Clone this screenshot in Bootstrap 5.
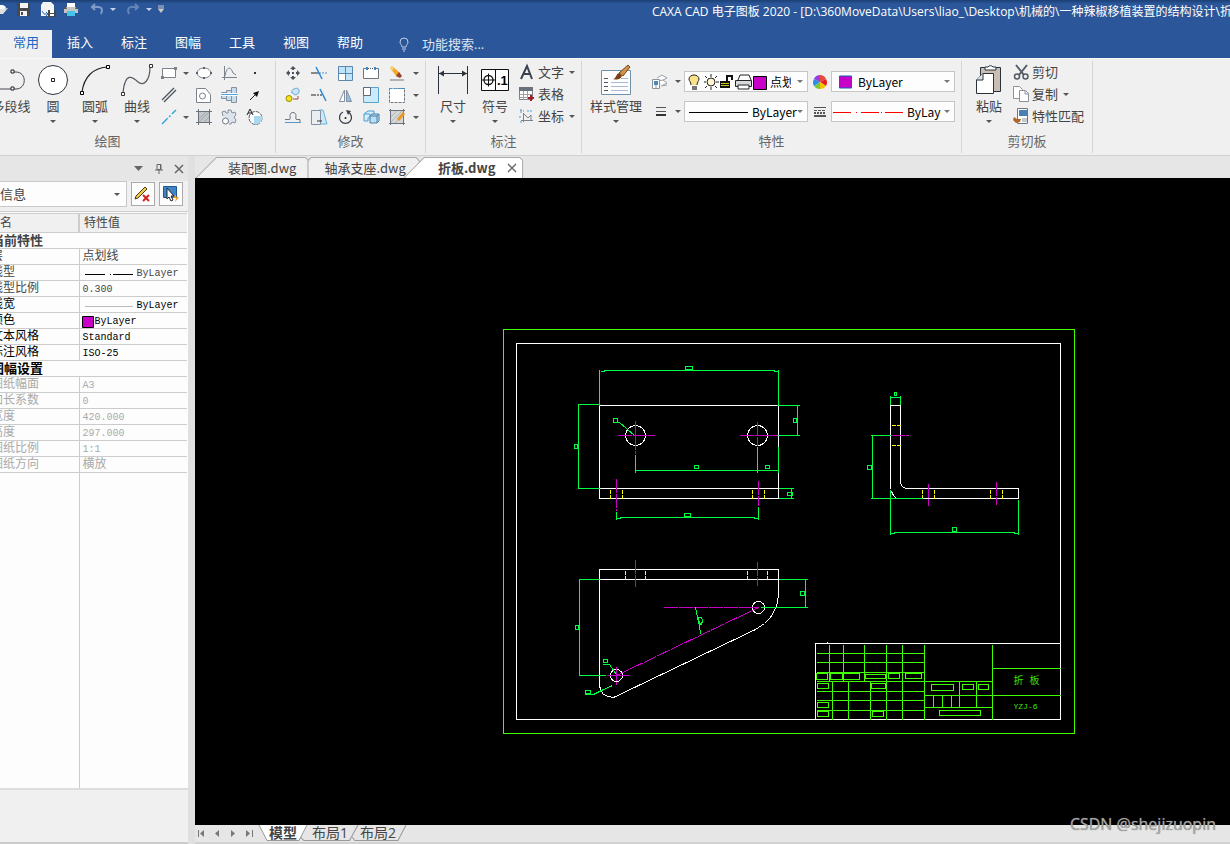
<!DOCTYPE html>
<html lang="zh-CN">
<head>
<meta charset="utf-8">
<meta name="viewport" content="width=device-width, initial-scale=1">
<title>CAXA CAD 电子图板 2020</title>
<link href="https://cdn.jsdelivr.net/npm/bootstrap@5.3.0/dist/css/bootstrap.min.css" rel="stylesheet">
<style>
body{font:13px/18px "Open Sans","Noto Sans CJK SC",sans-serif;color:#444;background:#e6e6e6;height:100vh;overflow:hidden}
button{background:none;border:0;padding:0;color:inherit}
svg{display:block;flex:none;overflow:visible}
.ui-cjk{font-family:"Noto Sans CJK SC",sans-serif}
/* title bar and menu */
.app-head{background:linear-gradient(#1d3f76,#2b579a 4px);color:#fff}
.title-row{height:30px}
.quick{height:18px;gap:6px}
.app-title{width:47%;font-size:12px;line-height:24px}
.menu-row{height:28px;gap:2px}
.menu-row .nav-link{width:52px;padding:0;line-height:24px;color:#fff;text-align:center;border-radius:0}
.menu-row .nav-link.active{background:#f0f0f0;color:#1a66c2}
.finder{background:none;border:0;color:#dce5f2;width:120px;padding:0;outline:0}
.finder::placeholder{color:#dce5f2;opacity:1}
/* ribbon */
.ribbon{height:98px;background:#f0f0f0;border-top:1px solid #f8f8f8;border-bottom:1px solid #d2d2d2}
.rgroup{border-right:1px solid #d5d5d5;margin:2px 0;padding-top:1px;display:flex;flex-direction:column}
.rgroup-name{color:#666;text-align:center;line-height:18px;margin-top:4px}
.bigbtn{width:42px;height:66px;display:flex;flex-direction:column;align-items:center;white-space:nowrap}
.bigbtn .pic{height:35px;display:flex;align-items:center}
.bigbtn.wide{width:60px}
.bigbtn.first-cut{margin-left:-10px}
.group-pad{padding-left:6px}
.caret{width:0;height:0;border:3px solid transparent;border-top-color:#555;border-bottom:0;flex:none}
.bigbtn .caret{margin-top:5px}
.tools{display:grid;grid-auto-rows:22px;grid-auto-columns:26px;grid-auto-flow:column;grid-template-rows:repeat(3,22px)}
.tools>*{display:flex;align-items:center;justify-content:center}
.tools .slim{width:12px}
.tool-line{height:22px;display:flex;align-items:center;gap:2px;line-height:16px;padding-bottom:2px}
.tool-line svg{width:18px}
.tool-line .caret{margin-left:3px}
.combo-rows{display:flex;flex-direction:column;gap:9px;padding-top:9px}
.combo{height:21px;width:124px;border:1px solid #c6c6c6;background:#fdfdfd;display:flex;align-items:center;color:#000}
.combo select{appearance:none;border:0;background:none;padding:0;outline:0;color:inherit;font:12px/16px "Noto Sans CJK SC",sans-serif;min-width:0}
.combo .caret{border-top-color:#777;margin:0 4px 0 auto}
.linework{shape-rendering:crispEdges}
/* properties panel */
.side{width:195px;border-right:7px solid #e0e0e0;background:#f0f0f0;flex:none}
.side-head{height:25px;background:#e6e6e6;gap:12px;padding-right:5px}
.side-filter{gap:4px;padding-bottom:4px}
.side-combo{width:127px;height:26px;border:1px solid #c8c8c8;border-left:0;background:#fdfdfd}
.side-combo select{appearance:none;border:0;background:none;padding:0;outline:0;flex:1;color:#444}
.side-btn{width:24px;height:24px;border:1px solid #aaa;background:#fdfdfd;display:flex;align-items:center;justify-content:center}
.prop-box{border-top:1px solid #ccc;padding-top:1px;background:#fdfdfd}
.props{font:12px/15px "Liberation Mono","Noto Sans CJK SC",monospace;width:187px;table-layout:fixed;border-collapse:collapse}
.props col.names{width:79px}
.props tr{height:16px}
.props td,.props th{padding:2px 0 0;border-bottom:1px solid #ccc;white-space:nowrap;overflow:hidden;height:16px;line-height:13px}
.props thead th{height:19px;line-height:16px;background:#f0f0f0;font-weight:400;border-top:1px solid #ccc}
.props tbody th{font-weight:400}
.props tbody th:first-child:not([colspan]){border-right:1px solid #ccc}
.props span.cut{display:block;margin-left:-9px}
.props td{padding-left:3px}
.props td .latin{font-size:10px}
.props .sect .cut{font-weight:700;font-size:13px}
.props .off{color:#aaa}
.props .on{color:#000}
.col-rest{width:80px;border-right:1px solid #ccc}
.side-foot{height:56px;border-top:2px solid #ddd;background:#f0f0f0;border-bottom:2px solid #ccc}
/* document area */
.doc-tabs{height:22px;padding-left:1px;background:#e6e6e6;line-height:16px}
.doc-tab,.sheet-tab{position:relative;display:flex;align-items:center;white-space:nowrap}
.doc-tab>svg.edge,.sheet-tab>svg.edge{position:absolute;inset:0;width:100%;height:100%;z-index:0}
.doc-tab>span,.sheet-tab>span{position:relative}
.doc-tab{height:21px;margin-top:1px}
.paper{background:#000;min-height:0}
.paper svg{width:100%;height:100%}
.sheets{height:19px;background:#e6e6e6;border-bottom:2px solid #d2d2d2;font-size:14px;line-height:16px}
.sheet-tab{height:16px}
.sheets .nav-mark{width:16px;padding-right:4px;display:flex;justify-content:center}
.stamp{position:absolute;right:14px;bottom:10px;font:16px/20px "Open Sans",sans-serif;color:#a6a6a6;text-shadow:0 0 1px #777}
</style>
</head>
<body class="d-flex flex-column">
<header class="app-head">
  <div class="title-row d-flex align-items-start">
    <div class="quick d-flex align-items-center">
      <button aria-label="打开"><svg width="10" height="16" viewBox="0 0 10 16"><path d="M0 4h3l3 2-1 2H0z" fill="#fff"/><path d="M0 8l8-1-5 6H0z" fill="#e0e0e0"/></svg></button>
      <button aria-label="保存"><svg width="15" height="16" viewBox="0 0 15 16"><path d="M1 2h13v13H1z" fill="#47484a"/><path d="M4 2h8v5H4zM4 10h7v5H4z" fill="#f3f3f3"/><path d="M5 11h2v3H5z" fill="#47484a"/></svg></button>
      <button class="ms-1" aria-label="另存为"><svg width="15" height="17" viewBox="0 0 15 17"><path d="M2 1h8l3 3v11H0V4z" fill="#f4f4f4"/><path d="M1 10l2 3h4M5 11l2 2-2 2" stroke="#2b6cb8" fill="none"/><path d="M7 9h8v7H7z" fill="#47484a"/><path d="M9 9h4v3H9zM9 13h4v2H9z" fill="#fff"/></svg></button>
      <button aria-label="打印"><svg width="18" height="16" viewBox="-1 0 18 16"><path d="M4 2h8v5H4z" fill="#fff"/><path d="M1 6h14v6H1z" fill="#c5c5c5"/><path d="M1 6h2l1 2h8l1-2h2v2H1z" fill="#555"/><path d="M4 10h8v5H4z" fill="#46c3e8"/></svg></button>
      <button class="ms-1" aria-label="撤销"><svg width="14" height="12" viewBox="0 0 14 12"><path d="M5 1L2 4l3 3M2 4h6c4 0 5 3 3 7" stroke="#7f9cc9" stroke-width="2" fill="none"/></svg></button>
      <span class="caret" style="border-top-color:#c7d3e6"></span>
      <button class="ms-1" aria-label="重做"><svg width="14" height="12" viewBox="0 0 14 12"><path d="M9 1l3 3-3 3M12 4H6C2 4 1 7 3 11" stroke="#6485b8" stroke-width="2" fill="none"/></svg></button>
      <span class="caret" style="border-top-color:#c7d3e6"></span>
      <button aria-label="自定义"><svg width="6" height="8" viewBox="0 0 6 8"><path d="M0 1h6M0 3h6" stroke="#c9c9c9"/><path d="M0 4h6L3 8z" fill="#c9c9c9"/></svg></button>
    </div>
    <div class="app-title ms-auto text-nowrap overflow-hidden">CAXA CAD 电子图板 2020 - [D:\360MoveData\Users\liao_\Desktop\机械的\一种辣椒移植装置的结构设计\折</div>
  </div>
  <nav class="menu-row nav flex-nowrap align-items-stretch">
    <a class="nav-link active" href="#">常用</a><a class="nav-link" href="#">插入</a><a class="nav-link" href="#">标注</a><a class="nav-link" href="#">图幅</a><a class="nav-link" href="#">工具</a><a class="nav-link" href="#">视图</a><a class="nav-link" href="#">帮助</a>
    <label class="d-flex align-items-center ms-3 ps-1" style="gap:12px">
      <svg width="12" height="14" viewBox="0 0 12 14"><path d="M4 10C4 8 2 7 2 5a4 4 0 0 1 8 0c0 2-2 3-2 5zM4 12h4M5 14h2" stroke="#c3cfe2" fill="none"/></svg>
      <input class="finder" type="text" placeholder="功能搜索..." aria-label="功能搜索">
    </label>
  </nav>
</header>

<div class="ribbon d-flex ui-cjk flex-nowrap">
  <section class="rgroup" style="width:276px">
    <div class="d-flex">
      <button class="bigbtn first-cut"><span class="pic"><svg width="30" height="32" viewBox="0 0 30 32"><path d="M17 8h3c11 0 11 17 0 17H0" fill="none" stroke="#444a55"/><path d="M15 6h3v3h-3zM15 23h3v3h-3z" fill="#fff" stroke="#222"/></svg></span>多段线</button>
      <button class="bigbtn"><span class="pic"><svg width="32" height="32" viewBox="0 0 32 32"><circle cx="16" cy="16" r="14.500" fill="#fff" stroke="#2d3440"/><path d="M14.500 14.500h3v3h-3z" fill="none" stroke="#222"/></svg></span>圆<i class="caret"></i></button>
      <button class="bigbtn"><span class="pic"><svg width="32" height="32" viewBox="0 0 32 32"><path d="M3 28C5 13 14 4 28 3" fill="none" stroke="#222" stroke-width="1.200"/><path d="M1.500 27.500h3v3h-3zM27.500 1.500h3v3h-3z" fill="#fff" stroke="#000"/></svg></span>圆弧<i class="caret"></i></button>
      <button class="bigbtn"><span class="pic"><svg width="32" height="32" viewBox="0 0 32 32"><path d="M2 29c2-22 10-16 15-11 6 5 12-2 12-15" fill="none" stroke="#555b64" stroke-width="1.200"/><path d="M.500 28.500h3v3h-3zM28.500.500h3v3h-3z" fill="#fff" stroke="#333"/></svg></span>曲线<i class="caret"></i></button>
      <div class="tools" style="grid-template-columns:22px 12px 24px">
        <button aria-label="矩形"><svg width="16" height="12" viewBox="0 0 16 12"><path d="M1.500 1.500h13v9h-13z" fill="#fff" stroke="#7a828c"/><path d="M0 9h3v3H0zM13 0h3v3h-3z" fill="#7a828c"/></svg></button>
        <button aria-label="平行线"><svg width="16" height="16" viewBox="0 0 16 16"><path d="M1 13L13 1M3 15L15 3" stroke="#4a515c" stroke-width="1.300"/></svg></button>
        <button aria-label="中心线"><svg width="16" height="16" viewBox="0 0 16 16"><path d="M1 15L15 1" stroke="#31a3dc" stroke-width="1.400" stroke-dasharray="8 2 2 2"/></svg></button>
        <span class="slim"><i class="caret"></i></span><span></span><span class="slim"><i class="caret"></i></span>
        <button aria-label="椭圆"><svg width="16" height="12" viewBox="0 0 16 12"><ellipse cx="8" cy="6" rx="7" ry="5" fill="#fff" stroke="#7a828c"/><path d="M0 5h2v2H0zM14 5h2v2h-2zM7 0h2v2H7zM7 10h2v2H7z" fill="#59616c"/></svg></button>
        <button aria-label="局部放大"><svg width="16" height="15" viewBox="0 0 16 15"><path d="M.500.500h9l5 6v8H.500z" fill="#fff" stroke="#7a828c"/><circle cx="6.500" cy="8" r="3" fill="none" stroke="#7a828c"/></svg></button>
        <button aria-label="填充"><svg width="16" height="16" viewBox="0 0 16 16"><path d="M3 3h10v10H3z" fill="#c4c7ca"/><path d="M3 10l7-7M3 13L13 3M8 13l5-5" stroke="#a4a9ae"/><path d="M2.500 0v16M13.500 0v16M0 2.500h16M0 13.500h16" stroke="#6b727c"/></svg></button>
        <button aria-label="公式曲线"><svg width="15" height="14" viewBox="0 0 15 14"><path d="M2.500 0v14M0 11.500h15" stroke="#7a828c"/><path d="M3 10C5-1 9 1 11 7l3 2" fill="none" stroke="#7a828c"/></svg></button>
        <button aria-label="轴"><svg width="17" height="16" viewBox="0 0 17 16"><path d="M.500 5.500h5v6h-5zM5.500 3.500h5v10h-5zM10.500.500h5v15h-5z" fill="#c9dcec" stroke="#8590a0"/><path d="M0 7.500h17" stroke="#fff" stroke-width="3"/><path d="M0 7.500h17" stroke="#4fa5e2"/></svg></button>
        <button aria-label="齿轮"><svg width="16" height="16" viewBox="0 0 16 16"><path d="M2 7L1 3l3-1 1 2h2V1h3l1 3 3-1 1 3-2 2 2 3-1 3-3-1-1 2H8" fill="#dde3e9" stroke="#8590a0"/><circle cx="4.500" cy="12" r="3" fill="#fff" stroke="#6c7683"/></svg></button>
        <button aria-label="点"><svg width="4" height="4"><path d="M1 1h2v2H1z" fill="#333"/></svg></button>
        <button aria-label="箭头"><svg width="12" height="12" viewBox="0 0 12 12"><path d="M1 11l5-5" stroke="#222"/><path d="M10 2L8 8 4 4z" fill="#111"/></svg></button>
        <button aria-label="块"><svg width="16" height="16" viewBox="0 0 16 16"><circle cx="8.500" cy="9" r="6.500" fill="#fff" stroke="#59616c" stroke-dasharray="4 1"/><path d="M7 7h8a6.500 6.500 0 0 1-8 8z" fill="#a9d8f2"/><path d="M0 6l3-6 3 6M1 4h4" stroke="#222" fill="none"/></svg></button>
      </div>
    </div>
    <div class="rgroup-name" style="padding-right:60px">绘图</div>
  </section>

  <section class="rgroup" style="width:150px">
    <div class="tools ms-1">
      <button aria-label="平移"><svg width="14" height="14" viewBox="0 0 14 14"><path d="M6 6h2v2H6zM6 2h2v2H6zM6 10h2v2H6zM2 6h2v2H2zM10 6h2v2h-2z" fill="#4c535d"/><path d="M7 0l3 3H4zM7 14l3-3H4zM0 7l3-3v6zM14 7l-3-3v6z" fill="#4c535d"/></svg></button>
      <button aria-label="平移复制"><svg width="16" height="16" viewBox="0 0 16 16"><circle cx="4" cy="11.500" r="3" fill="#f7e31c" stroke="#9b8b00"/><path d="M7 6a3 3 0 0 1 2-4c3-2 6 0 5 3s-5 4-6 1z" fill="#cbe5f7" stroke="#67a7d5"/><path d="M8 12h5v-3" stroke="#a44" fill="none"/></svg></button>
      <button aria-label="等距线"><svg width="16" height="14" viewBox="0 0 16 14"><path d="M0 9.500h4c2 0 1-2 1-4 0-4 6-4 6 0 0 2-1 4 1 4h3v3H0" fill="none" stroke="#6d7783"/><path d="M0 12.500h16" stroke="#5499cd"/></svg></button>
      <button aria-label="裁剪"><svg width="16" height="16" viewBox="0 0 16 16"><path d="M0 8h8" stroke="#222"/><path d="M8 8h8" stroke="#4b95d1" stroke-dasharray="2 1"/><path d="M5 2l6 12" stroke="#2e8ad8" stroke-width="1.500"/></svg></button>
      <button aria-label="延伸"><svg width="16" height="14" viewBox="0 0 16 14"><path d="M0 7h5" stroke="#222"/><path d="M6 7h5" stroke="#222" stroke-dasharray="2 1"/><path d="M9 1l6 12" stroke="#2e8ad8" stroke-width="1.500"/></svg></button>
      <button aria-label="拉伸"><svg width="16" height="16" viewBox="0 0 16 16"><path d="M8 1h4l4 14H8z" fill="#cce9fa" stroke="#6cb2dd"/><path d="M.500 1.500h9v14h-9z" fill="#e9eef2" stroke="#8590a0"/><path d="M6 12h5" stroke="#333"/></svg></button>
      <button aria-label="阵列"><svg width="15" height="15" viewBox="0 0 15 15"><path d="M.500 .500h14v14H.500z" fill="#bfe4fa" stroke="#5c87ac"/><path d="M1 8h6v6H1z" fill="#fff"/><path d="M.500 7.500h14M7.500.500v14" stroke="#5c87ac"/></svg></button>
      <button aria-label="镜像"><svg width="13" height="13" viewBox="0 0 13 13"><path d="M5.500 1v11.500h-5z" fill="#fff" stroke="#8590a0"/><path d="M7.500 1v11.500h5z" fill="#8cc2e8" stroke="#8590a0"/></svg></button>
      <button aria-label="旋转"><svg width="15" height="15" viewBox="0 0 15 15"><path d="M5 2a6 6 0 1 0 5 0" fill="none" stroke="#3a414c" stroke-width="1.300"/><path d="M8 0l5 1-3 4z" fill="#3a414c"/><circle cx="7.500" cy="8" r="1" fill="#222"/></svg></button>
      <button aria-label="打断"><svg width="16" height="14" viewBox="0 0 16 14"><path d="M4 2.500H.500v10h15v-10H12" fill="#fff" stroke="#6c7683"/><path d="M5 2.500h6" stroke="#555" stroke-dasharray="1 1"/><path d="M3 1h2v3H3zM11 1h2v3h-2z" fill="#2e8ad8"/></svg></button>
      <button aria-label="缩放"><svg width="16" height="16" viewBox="0 0 16 16"><path d="M.500.500h15v15H.500z" fill="#c9ebfb" stroke="#5ba3cf"/><path d="M.500.500h7v8h-7z" fill="#fff" stroke="#5c6b7a"/></svg></button>
      <button aria-label="分解"><svg width="17" height="14" viewBox="0 0 17 14"><path d="M1 4l4-3h6v7H5v3H1zM1 4h6v4" fill="#d6eefb" stroke="#4b9dd0"/><path d="M7 6l2-2h7v7l-2 2H7zM7 6h7v7M14 6l2-2" fill="#b8dff5" stroke="#4b7fa6"/></svg></button>
      <button aria-label="删除"><svg width="16" height="16" viewBox="0 0 16 16"><path d="M1 3l2-2 8 7-3 4z" fill="#f5a623"/><path d="M1 3l2-2 2 2-2 3z" fill="#f9cf7a"/><path d="M10 7l3 4-2 2-4-2z" fill="#96422f"/><path d="M1 15h14" stroke="#777"/></svg></button>
      <button aria-label="矩形选择"><svg width="16" height="15" viewBox="0 0 16 15"><path d="M.500 .500h15v14H.500z" fill="#fff" stroke="#6c7683" stroke-dasharray="3 1"/><path d="M0 .500h16" stroke="#3b9be0" stroke-dasharray="3 2"/></svg></button>
      <button aria-label="编辑填充"><svg width="16" height="16" viewBox="0 0 16 16"><path d="M2 2h12v12H2z" fill="#d4d6d8"/><path d="M2 8l6-6M2 13L13 2M6 14l8-8" stroke="#b4b7ba"/><path d="M1.500 0v16M14.500 0v16M0 1.500h16M0 14.500h16" stroke="#6b727c"/><path d="M9 11l6-7" stroke="#e79a22" stroke-width="3"/></svg></button>
      <span class="slim"><i class="caret"></i></span><span class="slim"><i class="caret"></i></span><span class="slim"><i class="caret"></i></span>
    </div>
    <div class="rgroup-name">修改</div>
  </section>

  <section class="rgroup" style="width:156px">
    <div class="d-flex group-pad">
      <button class="bigbtn"><span class="pic"><svg width="30" height="30" viewBox="0 0 30 30"><path d="M.500 1v28M29.500 1v28M1 8.500h28" stroke="#2b323d"/><path d="M1 8.500l5-3v6zM29 8.500l-5-3v6z" fill="#2b323d"/></svg></span>尺寸<i class="caret"></i></button>
      <button class="bigbtn"><span class="pic"><svg width="28" height="22" viewBox="0 0 28 22"><path d="M.500.500h27v21H.500zM14.500.500v21" fill="#fff" stroke="#111"/><circle cx="7.500" cy="11" r="4.500" fill="none" stroke="#111" stroke-width="1.300"/><path d="M1 11h13M7.500 4.500v13" stroke="#111"/><text x="16" y="16" font-size="13" font-weight="700" font-family="Liberation Sans">.1</text></svg></span>符号<i class="caret"></i></button>
      <div style="padding-left:2px">
        <button class="tool-line"><svg height="16" viewBox="0 0 18 16"><path d="M3 15L9 2l5 13M5 10h7" fill="none" stroke="#3a414c" stroke-width="2"/></svg>文字<i class="caret"></i></button>
        <button class="tool-line"><svg height="16" viewBox="0 0 18 16"><path d="M1.500 1.500h13v12h-13z" fill="#fff" stroke="#7a828c"/><path d="M1 1h14v4H1z" fill="#69717d"/><path d="M2 8.500h12M2 11.500h12M5.500 5v9M9.500 5v9" stroke="#9aa1a9"/><path d="M13 9v6M10 12h6" stroke="#a11f24" stroke-width="2"/></svg>表格</button>
        <button class="tool-line"><svg height="16" viewBox="0 0 18 16"><path d="M5.500 5v9M3 12.500h12M6 6l4 4 3-3v6" stroke="#7a828c" fill="none"/><path d="M2 3h4M3 1v4M9 3h6M1 9h3M2 14h3" stroke="#4c9dd8" stroke-dasharray="2 1"/></svg>坐标<i class="caret"></i></button>
      </div>
    </div>
    <div class="rgroup-name">标注</div>
  </section>

  <section class="rgroup" style="width:380px">
    <div class="d-flex ps-1">
      <button class="bigbtn wide"><span class="pic"><svg width="30" height="32" viewBox="0 0 30 32"><path d="M.500 6.500h29v24H.500z" fill="#fdfdfd" stroke="#6f93ad"/><path d="M3 14.500h4M3 18.500h4M3 22.500h4M3 26.500h4" stroke="#4c5664"/><path d="M10 18.500h17M10 22.500h17M10 26.500h17M20 14.500h7" stroke="#a9b7d3"/><path d="M18 9L27 1l2 2-7 9z" fill="#cf914b" stroke="#754a1d"/><path d="M12 15c3 0 3-5 6-6l3 3c-2 4-5 4-9 3z" fill="#7c3f12"/></svg></span>样式管理<i class="caret"></i></button>
      <div class="combo-rows">
        <div class="d-flex align-items-center">
          <button class="d-flex align-items-center" style="width:38px;padding-left:6px"><svg width="16" height="16" viewBox="0 0 16 16"><path d="M5 4l5-3 5 3-4 2M6 7l5-1 4 3-4 2M9 12l6-1" fill="#fff" stroke="#9aa1a9"/><path d="M.500 5.500h7v9h-7z" fill="#fff" stroke="#8b939c"/><path d="M2 7h4v4H2z" fill="#4c87b8"/><path d="M4 11v3" stroke="#8b939c"/></svg><i class="caret" style="margin-left:7px"></i></button>
          <div class="combo">
            <svg width="79" height="18" viewBox="0 0 79 18"><path d="M8 14h4M6 12c0-3-2-4-2-6a5 4 0 0 1 10 0c0 2-2 3-2 6" fill="#fbe28a" stroke="#222"/><path d="M7 13h5v4H7z" fill="#777"/><circle cx="26" cy="9" r="4" fill="#fff3d0" stroke="#222"/><path d="M26 1v3M26 14v3M19 9h2M31 9h3M20 3l2 2M32 3l-2 2M20 15l2-2M32 15l-2-2" stroke="#222"/><path d="M35 8h10v7H35z" fill="#111"/><path d="M36 10.500h8M36 12.500h8" stroke="#c9cb17"/><path d="M42 8V3h5v4" fill="none" stroke="#111" stroke-width="2"/><path d="M53 7l2-5h9l2 5" fill="#fff" stroke="#222"/><path d="M50.500 7.500h16v6h-16z" fill="#d6dadd" stroke="#222"/><path d="M53 12h11v4H53z" fill="#fff" stroke="#222"/><path d="M68.500 3.500h13v13h-13z" fill="#c800c8" stroke="#000"/></svg>
            <select aria-label="图层" style="width:21px;margin-left:6px"><option>点划线</option></select><i class="caret"></i>
          </div>
          <button aria-label="颜色" class="d-flex justify-content-center" style="width:23px"><svg width="14" height="14" viewBox="-7 -7 14 14"><path d="M0 0V-7A7 7 0 0 1 6 -3z" fill="#e64b3c"/><path d="M0 0L6-3A7 7 0 0 1 6 4z" fill="#e62020"/><path d="M0 0L6 4A7 7 0 0 1 0 7z" fill="#f5c400"/><path d="M0 0V7A7 7 0 0 1-6 4z" fill="#7ac93c"/><path d="M0 0L-6 4A7 7 0 0 1-6-3z" fill="#2b8be6"/><path d="M0 0L-6-3A7 7 0 0 1 0-7z" fill="#9a3ce0"/></svg></button>
          <div class="combo">
            <svg width="20" height="14" viewBox="0 0 20 14"><path d="M7.500 1h12v12h-12z" fill="#c800c8" stroke="#0b62b8"/></svg>
            <select aria-label="颜色" style="width:60px;margin-left:6px"><option>ByLayer</option></select><i class="caret"></i>
          </div>
        </div>
        <div class="d-flex align-items-center">
          <button class="d-flex align-items-center" style="width:38px;padding-left:10px"><svg class="linework" width="10" height="9" viewBox="0 0 10 9"><path d="M0 .500h10M0 4h10" stroke="#555"/><path d="M0 8h10" stroke="#333" stroke-width="2"/></svg><i class="caret" style="margin-left:9px"></i></button>
          <div class="combo">
            <svg class="linework" width="63" height="2"><path d="M4 1h59" stroke="#000" /></svg>
            <select aria-label="线型" style="width:45px;margin-left:4px"><option>ByLayer</option></select><i class="caret"></i>
          </div>
          <button aria-label="线宽" class="d-flex justify-content-center" style="width:23px"><svg class="linework" width="12" height="10" viewBox="0 0 12 10"><path d="M0 .500h12" stroke="#555"/><path d="M0 3h12" stroke="#555" stroke-dasharray="3 1"/><path d="M0 6h12" stroke="#555" stroke-width="2" stroke-dasharray="2 1"/><path d="M0 9h12" stroke="#555" stroke-width="2"/></svg></button>
          <div class="combo">
            <svg class="linework" width="71" height="2"><path d="M1 1h18M24 1h1M29 1h18M49 1h1M53 1h18" stroke="#f00"/></svg>
            <select aria-label="线宽" style="width:34px;margin-left:4px"><option>ByLayer</option></select><i class="caret"></i>
          </div>
        </div>
      </div>
    </div>
    <div class="rgroup-name">特性</div>
  </section>

  <section class="rgroup" style="width:131px">
    <div class="d-flex group-pad">
      <button class="bigbtn"><span class="pic"><svg width="26" height="31" viewBox="0 0 26 31"><path d="M4.500 3.500h20v24h-20z" fill="#c9bdb4" stroke="#2b323d"/><path d="M9 6V3h3a3 3 0 0 1 5 0h3v3z" fill="#fff" stroke="#2b323d"/><path d="M7 9.500h10.500v20H.500V16z" fill="#fff" stroke="#2b323d"/><path d="M.500 16H7V9.500" fill="#dde1e5" stroke="#2b323d"/></svg></span>粘贴<i class="caret"></i></button>
      <div style="padding-left:2px">
        <button class="tool-line"><svg height="16" viewBox="0 0 18 16"><path d="M4 1l8 10M15 1L7 11" stroke="#555b64" stroke-width="2"/><circle cx="5" cy="12.500" r="2.500" fill="none" stroke="#555b64" stroke-width="1.500"/><circle cx="13.500" cy="12.500" r="2.500" fill="none" stroke="#555b64" stroke-width="1.500"/></svg>剪切</button>
        <button class="tool-line"><svg height="16" viewBox="0 0 18 16"><path d="M1.500.500h6l3 3v9h-9z" fill="#fff" stroke="#8b939c"/><path d="M7.500 4.500h6l3 3v8h-9z" fill="#fff" stroke="#8b939c"/><path d="M13 5v3h4" fill="none" stroke="#8b939c"/></svg>复制<i class="caret"></i></button>
        <button class="tool-line"><svg height="16" viewBox="0 0 18 16"><path d="M5.500.500h10v15h-10z" fill="#fff" stroke="#6c7683"/><path d="M7 2h8v6H7z" fill="#4a7fb3"/><path d="M10 11h5M10 13h5" stroke="#8b939c"/><path d="M2 9l3 2 4 0-1 3-4 1-3-3z" fill="#b3662a"/></svg>特性匹配</button>
      </div>
    </div>
    <div class="rgroup-name">剪切板</div>
  </section>
</div>

<main class="d-flex flex-grow-1" style="min-height:0">
  <aside class="side d-flex flex-column ui-cjk">
    <div class="side-head d-flex align-items-center justify-content-end">
      <button aria-label="菜单"><svg width="9" height="5"><path d="M0 0h9L4.500 5z" fill="#666"/></svg></button>
      <button aria-label="固定"><svg width="8" height="10" viewBox="0 0 8 10"><path d="M2 .500h4v5H2zM0 6h8M4 6v4" fill="none" stroke="#666"/><path d="M5.500 0v6" stroke="#666"/></svg></button>
      <button aria-label="关闭"><svg width="8" height="8" viewBox="0 0 8 8"><path d="M0 0l8 8M8 0L0 8" stroke="#666" stroke-width="1.500"/></svg></button>
    </div>
    <div class="side-filter d-flex align-items-center">
      <div class="side-combo d-flex align-items-center"><select aria-label="信息"><option>信息</option></select><i class="caret" style="margin-right:6px"></i></div>
      <button class="side-btn" aria-label="清除"><svg width="18" height="18" viewBox="0 0 18 18"><path d="M2 11L11 2l2 2-9 9-3 1z" fill="#f3c84b" stroke="#4a3a12"/><path d="M9 10l6 6M15 10l-6 6" stroke="#d8231c" stroke-width="2"/></svg></button>
      <button class="side-btn" aria-label="选择"><svg width="18" height="18" viewBox="0 0 18 18"><path d="M1.500 1.500h13v11h-13z" fill="#3f86c9" stroke="#1f5793"/><path d="M5 3v11l2-2 2 4 2-1-2-4h3z" fill="#fff" stroke="#222"/><path d="M14 9l-3 4h3l-1 4 4-5h-3z" fill="#f59a1c"/></svg></button>
    </div>
    <div class="prop-box flex-grow-1 d-flex flex-column">
      <table class="props">
        <colgroup><col class="names"><col></colgroup>
        <thead><tr><th style="border-right:2px solid #ccc">名</th><th style="padding-left:4px">特性值</th></tr></thead>
        <tbody>
          <tr class="sect"><th colspan="2"><span class="cut">当前特性</span></th></tr>
          <tr><th><span class="cut">层</span></th><td>点划线</td></tr>
          <tr><th><span class="cut">线型</span></th><td><div class="d-flex align-items-center latin"><svg class="linework" width="54" height="2"><path d="M2 1h20M27 1h1M30 1h20" stroke="#000"/></svg>ByLayer</div></td></tr>
          <tr><th><span class="cut">线型比例</span></th><td><span class="latin">0.300</span></td></tr>
          <tr class="on"><th><span class="cut">线宽</span></th><td><div class="d-flex align-items-center latin"><svg class="linework" width="54" height="2"><path d="M2 1h48" stroke="#bbb"/></svg>ByLayer</div></td></tr>
          <tr class="on"><th><span class="cut">颜色</span></th><td><div class="d-flex align-items-center latin"><svg width="12" height="12"><path d="M-.500.500h11v11h-11z" fill="#c800c8" stroke="#000"/></svg>ByLayer</div></td></tr>
          <tr class="on"><th><span class="cut">文本风格</span></th><td><span class="latin">Standard</span></td></tr>
          <tr class="on"><th><span class="cut">标注风格</span></th><td><span class="latin">ISO-25</span></td></tr>
          <tr class="sect on"><th colspan="2"><span class="cut">图幅设置</span></th></tr>
          <tr class="off"><th><span class="cut">图纸幅面</span></th><td><span class="latin">A3</span></td></tr>
          <tr class="off"><th><span class="cut">加长系数</span></th><td><span class="latin">0</span></td></tr>
          <tr class="off"><th><span class="cut">宽度</span></th><td><span class="latin">420.000</span></td></tr>
          <tr class="off"><th><span class="cut">高度</span></th><td><span class="latin">297.000</span></td></tr>
          <tr class="off"><th><span class="cut">图纸比例</span></th><td><span class="latin">1:1</span></td></tr>
          <tr class="off"><th><span class="cut">图纸方向</span></th><td>横放</td></tr>
        </tbody>
      </table>
      <div class="col-rest flex-grow-1"></div>
    </div>
    <div class="side-foot"></div>
  </aside>

  <div class="d-flex flex-column flex-grow-1 position-relative" style="min-width:0">
    <div class="doc-tabs d-flex ui-cjk">
      <button class="doc-tab" style="padding:0 12px 0 32px"><svg class="edge" viewBox="0 0 110 21" preserveAspectRatio="none"><path d="M0 21L20 .500h87l3 3V21" fill="#f0f0f0" stroke="#aaa"/></svg><span>装配图.dwg</span></button>
      <button class="doc-tab" style="padding:0 14px 0 16px"><svg class="edge" viewBox="0 0 110 21" preserveAspectRatio="none"><path d="M0 21V4l3-3.500h104l3 4V21" fill="#f0f0f0" stroke="#aaa"/></svg><span>轴承支座.dwg</span></button>
      <button class="doc-tab fw-bold" style="padding:0 6px 0 34px;margin-left:-16px"><svg class="edge" viewBox="0 0 117 21" preserveAspectRatio="none"><path d="M0 21L20 .500h94l3 3V21" fill="#fff" stroke="#aaa"/></svg><span class="d-flex align-items-center" style="gap:13px">折板.dwg<svg width="8" height="8" viewBox="0 0 8 8"><path d="M0 0l8 8M8 0L0 8" stroke="#666" stroke-width="1.300"/></svg></span></button>
    </div>
    <div class="paper flex-grow-1">
      <svg viewBox="195 178 1035 647" shape-rendering="crispEdges" fill="none" stroke-width="1">
        <g transform="translate(.5 .5)">
          <!-- sheet frames -->
          <path d="M503 329H1074V733H503z" stroke="#40ff00"/>
          <path d="M516 343H1060V719H516z" stroke="#fff"/>
          <!-- part outlines -->
          <g stroke="#fff">
            <path d="M599 405H778V498H599zM599 488H778"/>
            <circle cx="635" cy="435" r="10"/><circle cx="757" cy="435" r="10"/>
            <path d="M890 488V405H900V483L902 486L905 488H1018V498H922M891 491L893 495L896 498"/>
            <path d="M599 569H778V595L776 606L770 617L764 623L755 629L613 697L608 696L603 694L600 689L599 685zM599 579H778"/>
            <circle cx="758" cy="607" r="6"/><circle cx="616" cy="675" r="6"/>
            <path d="M815 719V643H1060M826 642h1"/>
          </g>
          <!-- hidden edges -->
          <path stroke="#ff0" stroke-dasharray="4 1" d="M610 489V498M622 489V498M752 489V498M764 489V498M891 425H900M891 445H900M922 489V498M934 489V498M990 489V498M1002 489V498M625 570V579M645 570V579M747 570V579M767 570V579"/>
          <!-- centre lines -->
          <path stroke="#c800c8" stroke-dasharray="14 1" d="M617 435H654M635 420V453M739 435H776M757 421V445M616 478V510M758 480V505M890 435H908M928 483V505M996 481V504M635 559V586M757 561V585M663 607H758M616 675L758 607M616 666V684M606 675H629"/>
          <!-- dimensions -->
          <g stroke="#00ff40">
            <path d="M599 369V405M778 369V405M600 371H604V370H774V371H778"/>
            <path d="M577 404H599M577 488H599M578 404V488"/>
            <path d="M612 422H619L634 435"/>
            <path d="M776 405H799M776 435H799M797 405V435"/>
            <path d="M635 454V472M757 446V472M778 446V472M635 470H778"/>
            <path d="M616 511V519M758 506V519M616 518H620V517H754V518H758"/>
            <path d="M778 488H793M778 498H793M791 488V498"/>
            <path d="M890 395V404M900 395V404M890 397H900"/>
            <path d="M870 435H890M870 498H922M872 435V498"/>
            <path d="M890 489V534M1018 499V534M890 533H894V532H1014V533H1018"/>
            <path d="M578 579H599M578 675H605M579 579V675"/>
            <path d="M778 579H807M760 607H807M805 579V607"/>
            <path d="M695 607L697 617L699 625L700 634M698 617H701L702 620L701 624L699 623z"/>
            <path d="M602 664H609L616 674M584 694H593L601 690L612 685"/>
            <path d="M685 366h7v3h-7zM574 444h3v4h-3zM613 418h4v4h-4zM793 418h3v4h-3zM694 465h4v3h-4zM765 465h4v3h-4zM684 513h6v3h-6zM787 492h5v3h-5zM894 392h2v3h-2zM867 465h4v4h-4zM952 527h4v4h-4zM575 625h3v4h-3zM800 591h4v4h-4zM603 659h4v3h-4zM585 690h5v3h-5z"/>
          </g>
          <!-- title block -->
          <g stroke="#40ff00">
            <path d="M816 653H924M816 662H924M816 672H924M816 681H992M816 691H924M816 700H924M816 710H924M924 695H1060M924 707H992M992 668H1060"/>
            <path d="M829 644V681M843 644V681M864 644V681M886 644V719M902 644V719M832 681V719M848 681V719M870 681V719M924 644V719M992 644V719M933 695V707M942 695V707M951 695V707M959 681V707M976 681V707"/>
            <path d="M816 673h11v6h-11zM830 673h12v6h-12zM843 673h16v6h-16zM865 674h20v4h-20zM888 673h11v5h-11zM905 673h16v5h-16zM817 683h11v5h-11zM871 683h14v5h-14zM817 702h11v5h-11zM817 711h11v5h-11zM872 711h11v5h-11zM931 684h22v6h-22zM962 684h11v5h-11zM978 684h10v5h-10zM939 710h41v5h-41z"/>
          </g>
          <g fill="#3be00a" font-family="'Liberation Mono','Noto Sans CJK SC',monospace">
            <text x="1013" y="683" font-size="10" xml:space="preserve">折 板</text>
            <text x="1013" y="708" font-size="8">YZJ-6</text>
          </g>
        </g>
      </svg>
    </div>
    <div class="sheets d-flex">
      <button class="nav-mark align-items-center ms-0" aria-label="首页"><svg width="7" height="7"><path d="M0 0h1v7H0zM6 0v7L2 3.500z" fill="#777"/></svg></button>
      <button class="nav-mark align-items-center" aria-label="上一页"><svg width="5" height="7"><path d="M4 0v7L0 3.500z" fill="#777"/></svg></button>
      <button class="nav-mark align-items-center" aria-label="下一页"><svg width="5" height="7"><path d="M0 0v7l4-3.500z" fill="#777"/></svg></button>
      <button class="nav-mark align-items-center" aria-label="末页"><svg width="7" height="7"><path d="M6 0h1v7H6zM0 0v7l4-3.500z" fill="#777"/></svg></button>
      <button class="sheet-tab fw-bold" style="padding:0 10px"><svg class="edge" viewBox="0 0 48 16" preserveAspectRatio="none"><path d="M0 0l8 15.500h32L48 0" fill="#fff" stroke="#999"/></svg><span>模型</span></button>
      <button class="sheet-tab" style="padding:0 10px 0 5px"><svg class="edge" viewBox="0 0 48 16" preserveAspectRatio="none"><path d="M-6 12l3 3.500h43L48 0" fill="none" stroke="#999"/></svg><span>布局1</span></button>
      <button class="sheet-tab" style="padding:0 10px 0 2px"><svg class="edge" viewBox="0 0 48 16" preserveAspectRatio="none"><path d="M-6 12l3 3.500h43L48 0" fill="none" stroke="#999"/></svg><span>布局2</span></button>
    </div>
    <div class="stamp">CSDN @shejizuopin</div>
  </div>
</main>
<script src="https://cdn.jsdelivr.net/npm/bootstrap@5.3.0/dist/js/bootstrap.bundle.min.js"></script>
</body>
</html>
